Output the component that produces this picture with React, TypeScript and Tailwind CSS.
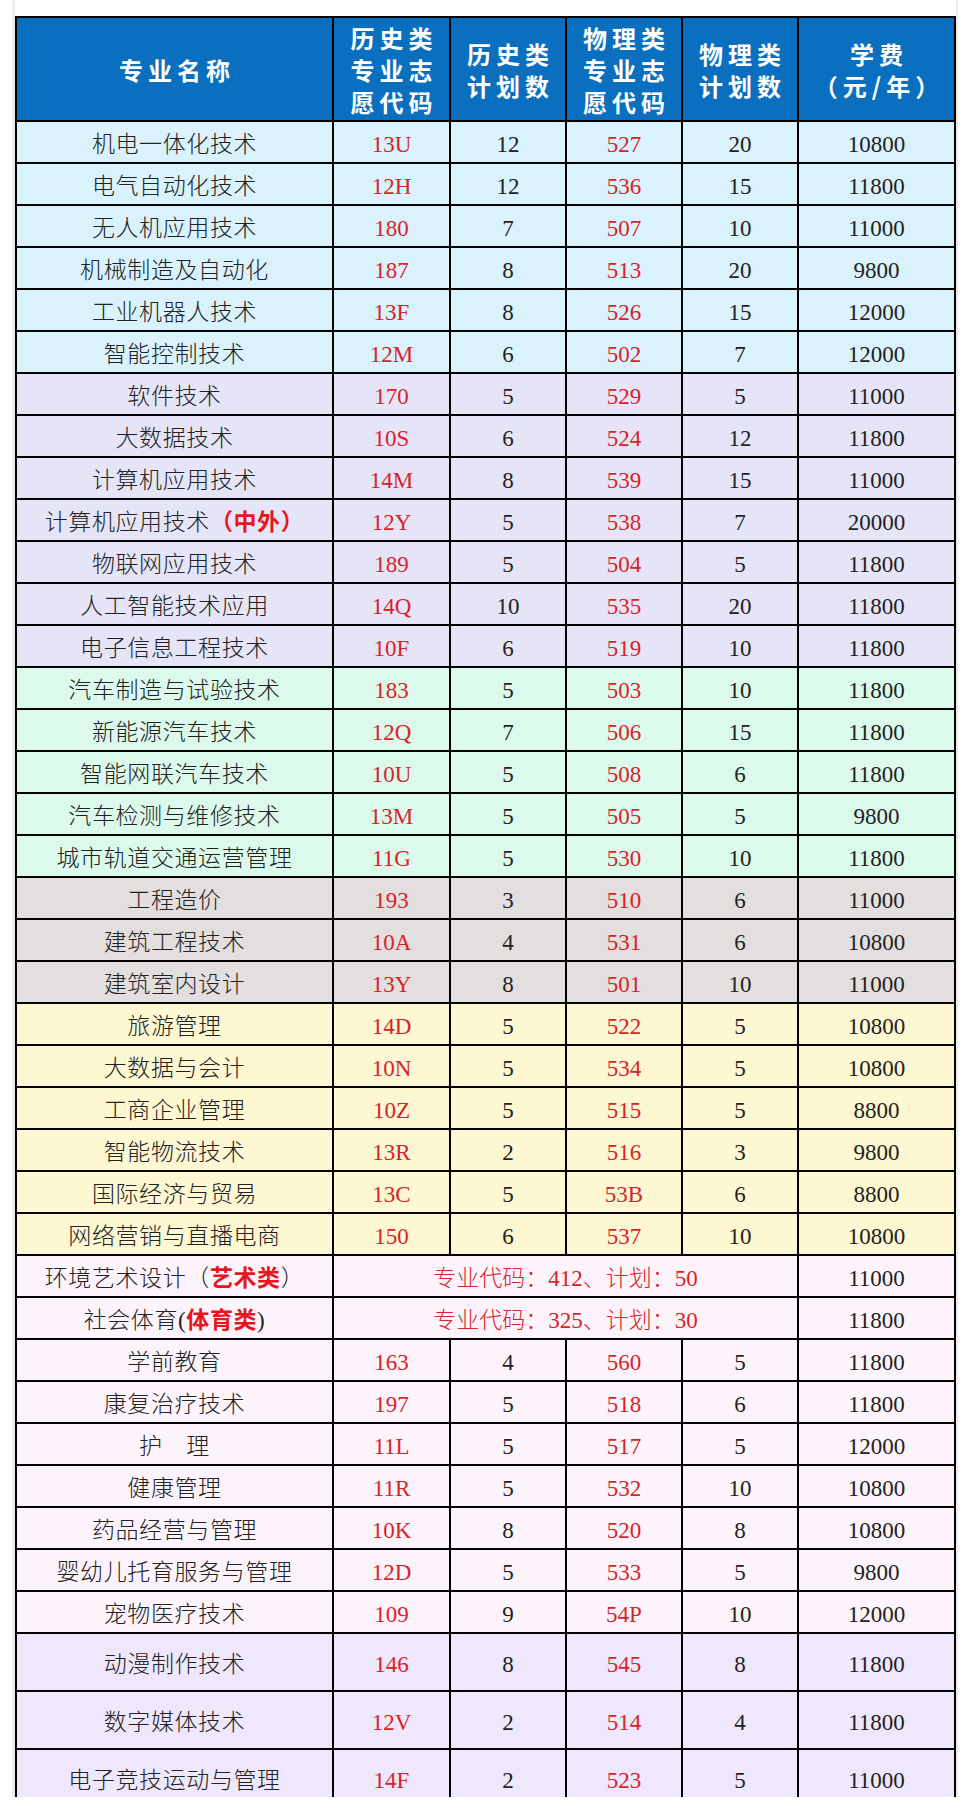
import React from "react";

type Row = {
  name: React.ReactNode;
  hCode?: string;
  hPlan?: string;
  pCode?: string;
  pPlan?: string;
  merged?: string;
  fee: string;
  bg: string;
  tall?: boolean;
};

const BLUE = "bg-[#d9f2fc]";
const LAV = "bg-[#e6e5f8]";
const MINT = "bg-[#dcfaec]";
const GRAY = "bg-[#e3dfde]";
const YEL = "bg-[#fdf7d2]";
const PINK = "bg-[#fdf4fb]";
const VIO = "bg-[#efe7fb]";

const r = (
  name: React.ReactNode,
  hCode: string,
  hPlan: string,
  pCode: string,
  pPlan: string,
  fee: string,
  bg: string,
  tall = false
): Row => ({ name, hCode, hPlan, pCode, pPlan, fee, bg, tall });

const Red = ({ children }: { children: React.ReactNode }) => (
  <span className="font-bold text-[#e8151d]">{children}</span>
);

const rows: Row[] = [
  r("机电一体化技术", "13U", "12", "527", "20", "10800", BLUE),
  r("电气自动化技术", "12H", "12", "536", "15", "11800", BLUE),
  r("无人机应用技术", "180", "7", "507", "10", "11000", BLUE),
  r("机械制造及自动化", "187", "8", "513", "20", "9800", BLUE),
  r("工业机器人技术", "13F", "8", "526", "15", "12000", BLUE),
  r("智能控制技术", "12M", "6", "502", "7", "12000", BLUE),
  r("软件技术", "170", "5", "529", "5", "11000", LAV),
  r("大数据技术", "10S", "6", "524", "12", "11800", LAV),
  r("计算机应用技术", "14M", "8", "539", "15", "11000", LAV),
  r(
    <>
      计算机应用技术<Red>（中外）</Red>
    </>,
    "12Y",
    "5",
    "538",
    "7",
    "20000",
    LAV
  ),
  r("物联网应用技术", "189", "5", "504", "5", "11800", LAV),
  r("人工智能技术应用", "14Q", "10", "535", "20", "11800", LAV),
  r("电子信息工程技术", "10F", "6", "519", "10", "11800", LAV),
  r("汽车制造与试验技术", "183", "5", "503", "10", "11800", MINT),
  r("新能源汽车技术", "12Q", "7", "506", "15", "11800", MINT),
  r("智能网联汽车技术", "10U", "5", "508", "6", "11800", MINT),
  r("汽车检测与维修技术", "13M", "5", "505", "5", "9800", MINT),
  r("城市轨道交通运营管理", "11G", "5", "530", "10", "11800", MINT),
  r("工程造价", "193", "3", "510", "6", "11000", GRAY),
  r("建筑工程技术", "10A", "4", "531", "6", "10800", GRAY),
  r("建筑室内设计", "13Y", "8", "501", "10", "11000", GRAY),
  r("旅游管理", "14D", "5", "522", "5", "10800", YEL),
  r("大数据与会计", "10N", "5", "534", "5", "10800", YEL),
  r("工商企业管理", "10Z", "5", "515", "5", "8800", YEL),
  r("智能物流技术", "13R", "2", "516", "3", "9800", YEL),
  r("国际经济与贸易", "13C", "5", "53B", "6", "8800", YEL),
  r("网络营销与直播电商", "150", "6", "537", "10", "10800", YEL),
  {
    name: (
      <>
        环境艺术设计（<Red>艺术类</Red>）
      </>
    ),
    merged: "专业代码：412、计划：50",
    fee: "11000",
    bg: PINK,
  },
  {
    name: (
      <>
        社会体育(<Red>体育类</Red>)
      </>
    ),
    merged: "专业代码：325、计划：30",
    fee: "11800",
    bg: PINK,
  },
  r("学前教育", "163", "4", "560", "5", "11800", PINK),
  r("康复治疗技术", "197", "5", "518", "6", "11800", PINK),
  r("护\u3000理", "11L", "5", "517", "5", "12000", PINK),
  r("健康管理", "11R", "5", "532", "10", "10800", PINK),
  r("药品经营与管理", "10K", "8", "520", "8", "10800", PINK),
  r("婴幼儿托育服务与管理", "12D", "5", "533", "5", "9800", PINK),
  r("宠物医疗技术", "109", "9", "54P", "10", "12000", PINK),
  r("动漫制作技术", "146", "8", "545", "8", "11800", VIO, true),
  r("数字媒体技术", "12V", "2", "514", "4", "11800", VIO, true),
  r("电子竞技运动与管理", "14F", "2", "523", "5", "11000", VIO, true),
];

const headers: string[][] = [
  ["专业名称"],
  ["历史类", "专业志", "愿代码"],
  ["历史类", "计划数"],
  ["物理类", "专业志", "愿代码"],
  ["物理类", "计划数"],
  ["学费", "（元/年）"],
];

const font = {
  fontFamily: '"Liberation Serif", "Noto Sans CJK SC", serif',
};

export default function App() {
  return (
    <div className="min-h-[1813px] bg-white pl-[12px]">
      <div className="h-[1797px] w-[946px] overflow-hidden border-l-[3px] border-r-[2px] border-[#ececec] pt-[16px]">
        <div
          className="grid grid-cols-[315px_115px_114px_114px_114px_155px] gap-[2px] border-2 border-black bg-black text-[23px] leading-none text-[#222222]"
          style={font}
        >
          {headers.map((lines, i) => (
            <div
              key={i}
              className="flex h-[102px] flex-col items-center justify-center bg-[#0a6fbe] pl-[5px] pt-[2px] text-[24px] font-bold leading-[32px] tracking-[5px] text-white"
              style={{ fontFamily: '"Noto Sans CJK SC", sans-serif' }}
            >
              {lines.map((l) => (
                <span key={l}>{l}</span>
              ))}
            </div>
          ))}

          {rows.map((row, i) => {
            const h = row.tall ? "h-[56px]" : "h-[40px]";
            const cell = `flex items-center justify-center pt-[5px] ${h} ${row.bg}`;
            return (
              <React.Fragment key={i}>
                <div className={`${cell} font-light tracking-[0.6px]`}>
                  {row.name}
                </div>
                {row.merged ? (
                  <div className={`${cell} col-span-4 font-light text-[#d8232a]`}>
                    {row.merged}
                  </div>
                ) : (
                  <>
                    <div className={`${cell} text-[#d8232a]`}>{row.hCode}</div>
                    <div className={cell}>{row.hPlan}</div>
                    <div className={`${cell} text-[#d8232a]`}>{row.pCode}</div>
                    <div className={cell}>{row.pPlan}</div>
                  </>
                )}
                <div className={cell}>{row.fee}</div>
              </React.Fragment>
            );
          })}
        </div>
      </div>
    </div>
  );
}
